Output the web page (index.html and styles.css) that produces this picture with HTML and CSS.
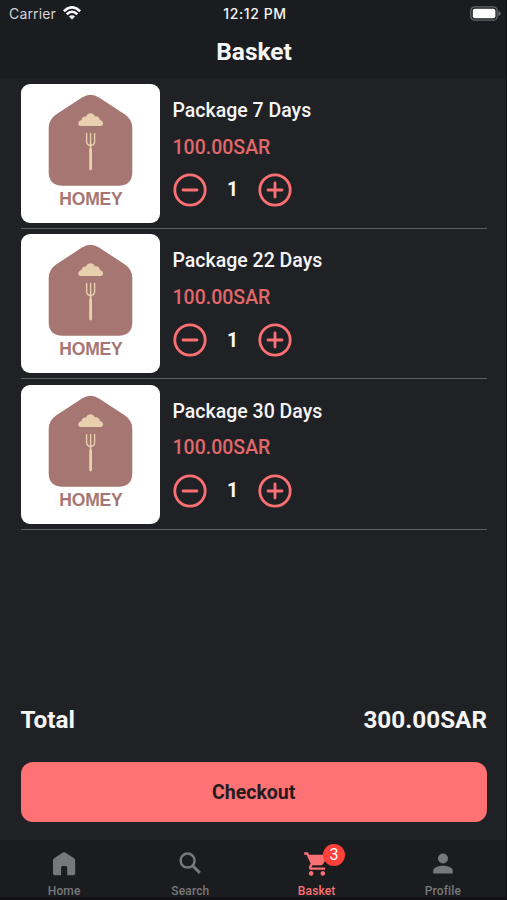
FILE: index.html
```html
<!DOCTYPE html>
<html lang="en">
<head>
<meta charset="utf-8">
<title>Basket</title>
<link rel="stylesheet" href="styles.css">
</head>
<body>
<svg class="defs" width="0" height="0" aria-hidden="true">
  <symbol id="logo" viewBox="0 0 139 139">
    <path fill="#a57672" d="M61 13.500Q69.500 8 78 13.500L104 30.500Q111.300 35.500 111.300 44V88Q111.300 101.700 97.500 101.700H41.500Q27.700 101.700 27.700 88V44Q27.700 35.500 35 30.500Z"/>
    <path fill="#e8cfad" d="M59.500 42C56.500 42 56.500 36.500 60.500 36C61 33 63 32 65 32.500C66.500 28 72.500 28 74 32.500C76.500 31.500 78.500 33.500 79 36C83 36.500 83 42 79.500 42Z"/>
    <path fill="none" stroke="#e8cfad" stroke-width="1.400" stroke-linecap="round" d="M65.600 49.500V57.500Q65.600 61 69.600 61.500Q73.600 61 73.600 57.500V49.500M69.600 49.500V61"/>
    <path fill="none" stroke="#e8cfad" stroke-width="2.800" stroke-linecap="round" d="M69.600 66V85"/>
    <path stroke="#e8cfad" stroke-width="1.800" d="M69.600 60V68"/>
  </symbol>
  <symbol id="minus" viewBox="0 0 34 34">
    <circle cx="17" cy="17" r="15.200" fill="none" stroke="currentColor" stroke-width="2.800"/>
    <path d="M10 17H24" stroke="currentColor" stroke-width="2.800" stroke-linecap="round"/>
  </symbol>
  <symbol id="plus" viewBox="0 0 34 34">
    <circle cx="17" cy="17" r="15.200" fill="none" stroke="currentColor" stroke-width="2.800"/>
    <path d="M10 17H24M17 10V24" stroke="currentColor" stroke-width="2.800" stroke-linecap="round"/>
  </symbol>
</svg>
<div class="app">
  <header class="header">
    <div class="status">
      <div class="carrier"><span>Carrier</span>
        <svg width="18" height="14" viewBox="0 0 18 14"><g fill="none" stroke="#fff" stroke-width="2.600"><path d="M.8 5.200Q9-2.600 17.200 5.200"/><path d="M3.700 8.300Q9 3.200 14.300 8.300"/></g><path fill="#fff" d="M9 13.500L5.900 10.500Q9 7.900 12.100 10.500Z"/></svg>
      </div>
      <span class="time">12:12 PM</span>
      <svg class="battery" width="31" height="15" viewBox="0 0 31 15"><rect x=".8" y=".8" width="26.400" height="13.400" rx="4" fill="none" stroke="#66676a" stroke-width="1.300"/><rect x="2.800" y="2.700" width="22.600" height="9.600" rx="2" fill="#fff"/><path d="M28.300 5Q30.800 5.500 30.800 7.500T28.300 10Z" fill="#66676a"/></svg>
    </div>
    <h1>Basket</h1>
  </header>
  <main class="items">
    <article class="item">
      <svg class="thumb" viewBox="0 0 139 139"><use href="#logo"/><text x="70" y="121" text-anchor="middle" textLength="63.500" class="logo-name">HOMEY</text></svg>
      <div class="info">
        <h2>Package 7 Days</h2>
        <p class="price">100.00SAR</p>
        <div class="stepper"><svg><use href="#minus"/></svg><span>1</span><svg><use href="#plus"/></svg></div>
      </div>
    </article>
    <article class="item">
      <svg class="thumb" viewBox="0 0 139 139"><use href="#logo"/><text x="70" y="121" text-anchor="middle" textLength="63.500" class="logo-name">HOMEY</text></svg>
      <div class="info">
        <h2>Package 22 Days</h2>
        <p class="price">100.00SAR</p>
        <div class="stepper"><svg><use href="#minus"/></svg><span>1</span><svg><use href="#plus"/></svg></div>
      </div>
    </article>
    <article class="item">
      <svg class="thumb" viewBox="0 0 139 139"><use href="#logo"/><text x="70" y="121" text-anchor="middle" textLength="63.500" class="logo-name">HOMEY</text></svg>
      <div class="info">
        <h2>Package 30 Days</h2>
        <p class="price">100.00SAR</p>
        <div class="stepper"><svg><use href="#minus"/></svg><span>1</span><svg><use href="#plus"/></svg></div>
      </div>
    </article>
  </main>
  <section class="summary">
    <div class="total"><span>Total</span><span>300.00SAR</span></div>
    <button class="checkout">Checkout</button>
  </section>
  <nav class="tabs">
    <a class="tab"><svg width="28" height="28" viewBox="0 0 28 28"><path fill="currentColor" d="M12.800 2.600Q14 1.800 15.200 2.600L24 8.300Q25.200 9.200 25.200 10.700V23.500Q25.200 25.200 23.500 25.200H17.200V17.500Q17.200 16 15.700 16H12.600Q11.100 16 11.100 17.500V25.200H4.700Q3 25.200 3 23.500V10.700Q3 9.200 4.200 8.300Z"/></svg><span>Home</span></a>
    <a class="tab"><svg width="28" height="28" viewBox="0 0 28 28"><circle cx="11.600" cy="10.600" r="7" fill="none" stroke="currentColor" stroke-width="2.500"/><path d="M16.500 15.600L23.900 22.900" stroke="currentColor" stroke-width="2.900"/></svg><span>Search</span></a>
    <a class="tab active"><svg width="28" height="28" viewBox="0 0 24 24"><path fill="currentColor" d="M7 18c-1.100 0-1.990.9-1.990 2S5.900 22 7 22s2-.9 2-2-.9-2-2-2zM1 2v2h2l3.600 7.590-1.350 2.450c-.16.280-.25.610-.25.960 0 1.100.9 2 2 2h12v-2H7.420c-.14 0-.25-.110-.25-.250l.03-.120.900-1.630h7.450c.75 0 1.410-.410 1.750-1.030l3.580-6.490A1.003 1.003 0 0 0 20 4H5.210l-.94-2H1zm16 16c-1.100 0-1.990.9-1.990 2s.89 2 1.990 2 2-.9 2-2-.9-2-2-2z"/></svg><b class="badge">3</b><span>Basket</span></a>
    <a class="tab"><svg width="28" height="28" viewBox="0 0 28 28"><circle cx="14" cy="8.500" r="5" fill="currentColor"/><path fill="currentColor" d="M4.200 23.400V20.800C4.200 17.300 10 15.700 14 15.700S23.800 17.300 23.800 20.800V23.400Z"/></svg><span>Profile</span></a>
  </nav>
</div>
</body>
</html>
```
FILE: styles.css
```css
* { box-sizing: border-box; }
body { margin: 0; background: #202125; color: #f5f5f6; font-family: Roboto, sans-serif; }
h1, h2, p { margin: 0; }
.defs { display: block; }
.app { height: 900px; display: flex; flex-direction: column; border-right: 1px solid #0e0f11; }
.header { height: 78px; flex: none; background: #1b1c1f; }
.status { height: 27px; padding: 0 5px 0 9px; display: grid; grid-template-columns: 1fr auto 1fr; align-items: center; font-family: Inter, sans-serif; }
.carrier { display: flex; align-items: center; gap: 7px; color: #d4d4d6; font-size: 14px; letter-spacing: 0.15px; }
.carrier svg { margin-top: -1px; }
.time { font-weight: 500; font-size: 14px; letter-spacing: 0.600px; }
.battery { justify-self: end; }
h1 { text-align: center; font-size: 24.500px; font-weight: 700; line-height: 49px; padding-left: 2px; }
.items { padding: 0 19px 0 20.500px; flex: 1; }
.item { height: 150.300px; display: flex; gap: 13px; padding-top: 5.300px; border-bottom: 1.500px solid #606164; }
.item:first-child { height: 151px; padding-top: 6px; }
.thumb { width: 139px; height: 139px; border-radius: 9px; background: #fff; flex: none; }
.logo-name { font: bold 17.500px "Liberation Sans", sans-serif; fill: #a57672; }
.info { padding-top: 14.200px; }
h2 { font-size: 19.500px; font-weight: 500; line-height: 25px; }
.price { margin-top: 11.500px; font-size: 19.500px; font-weight: 500; line-height: 25px; color: #e0686a; }
.stepper { margin: 13.300px 0 0 0.500px; display: flex; align-items: center; color: #fb7073; }
.stepper svg { width: 34px; height: 34px; }
.stepper span { width: 51px; text-align: center; color: #f5f5f6; font-size: 19.500px; font-weight: 700; }
.summary { padding: 0 19px 18px 20.500px; }
.total { display: flex; justify-content: space-between; font-size: 24.300px; font-weight: 700; line-height: 30px; margin-bottom: 27px; }
.checkout { display: block; width: 100%; height: 60px; border: 0; border-radius: 12px; background: #ff7274; color: #241c20; font: 700 19.500px Roboto, sans-serif; }
.tabs { height: 60px; flex: none; display: grid; grid-template-columns: repeat(4, 1fr); padding-left: 1px; background: #1b1c1f; border-bottom: 3px solid #111116; }
.tab { position: relative; display: flex; flex-direction: column; align-items: center; padding-top: 10px; color: #77787a; }
.tab svg { flex: none; }
.tab span { font-size: 12px; font-weight: 500; line-height: 14px; margin-top: 6px; letter-spacing: 0.15px; }
.active { color: #fb7073; }
.badge { position: absolute; top: 4px; left: 69.500px; width: 22px; height: 22px; border-radius: 50%; background: #ff3f38; color: #fff; font-size: 16px; font-weight: 400; line-height: 22px; text-align: center; }
```
